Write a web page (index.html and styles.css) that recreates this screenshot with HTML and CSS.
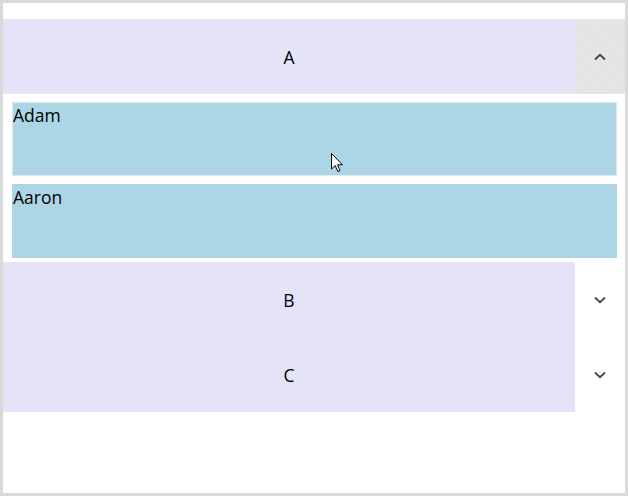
FILE: index.html
```html
<!DOCTYPE html>
<html lang="en">
<head>
  <meta charset="UTF-8">
  <title>Expander List</title>
  <link rel="stylesheet" href="styles.css">
</head>
<body>
  <div class="frame">
    <div class="group">
      <div class="group-head">
        <div class="title">A</div>
        <div class="toggle hover">
          <svg width="12" height="8" viewBox="0 0 12 8"><path d="M1 6.5 L6 1.8 L11 6.5" fill="none" stroke="#444" stroke-width="1.8"/></svg>
        </div>
      </div>
      <div class="items">
        <div class="item hover">Adam</div>
        <div class="item">Aaron</div>
      </div>
    </div>

    <div class="group">
      <div class="group-head">
        <div class="title">B</div>
        <div class="toggle">
          <svg width="12" height="8" viewBox="0 0 12 8"><path d="M1 1.5 L6 6.2 L11 1.5" fill="none" stroke="#444" stroke-width="1.8"/></svg>
        </div>
      </div>
    </div>

    <div class="group">
      <div class="group-head">
        <div class="title">C</div>
        <div class="toggle">
          <svg width="12" height="8" viewBox="0 0 12 8"><path d="M1 1.5 L6 6.2 L11 1.5" fill="none" stroke="#444" stroke-width="1.8"/></svg>
        </div>
      </div>
    </div>

    <svg class="cursor" width="14" height="21" viewBox="0 0 14 21">
      <path d="M0.5 0.5 L0.5 16 L4.2 12.6 L6.8 18.6 L9 17.6 L6.5 11.8 L11.5 11.8 Z" fill="#fff" stroke="#000" stroke-width="1"/>
    </svg>
  </div>
</body>
</html>
```

FILE: styles.css
```css
html, body {
  margin: 0;
  padding: 0;
  background: #fff;
}

body {
  font-family: 'Open Sans', 'Segoe UI', sans-serif;
  font-size: 17.5px;
  color: #000;
}

.frame {
  position: relative;
  box-sizing: border-box;
  width: 628px;
  height: 496px;
  border: 3px solid #d9d9d9;
  padding-top: 16px;
}

.group-head {
  display: flex;
  height: 75px;
}

.title {
  flex: 1;
  background: #e4e3f8;
  display: flex;
  align-items: center;
  justify-content: center;
}

.toggle {
  width: 50px;
  display: flex;
  align-items: center;
  justify-content: center;
}

.toggle.hover {
  background-color: #e3e3e3;
  background-image: repeating-linear-gradient(45deg, rgba(255,255,255,0.18) 0 1px, transparent 1px 3px);
}

.items {
  display: flex;
  flex-direction: column;
  gap: 8px;
  padding: 8px 8px 4px 9px;
}

.item {
  height: 72px;
  border: 1px solid #add6e5;
  background: #acd5e5;
  line-height: 24px;
}

.item.hover {
  border-color: #e2e6e8;
}

.cursor {
  position: absolute;
  left: 328px;
  top: 150px;
}
```
